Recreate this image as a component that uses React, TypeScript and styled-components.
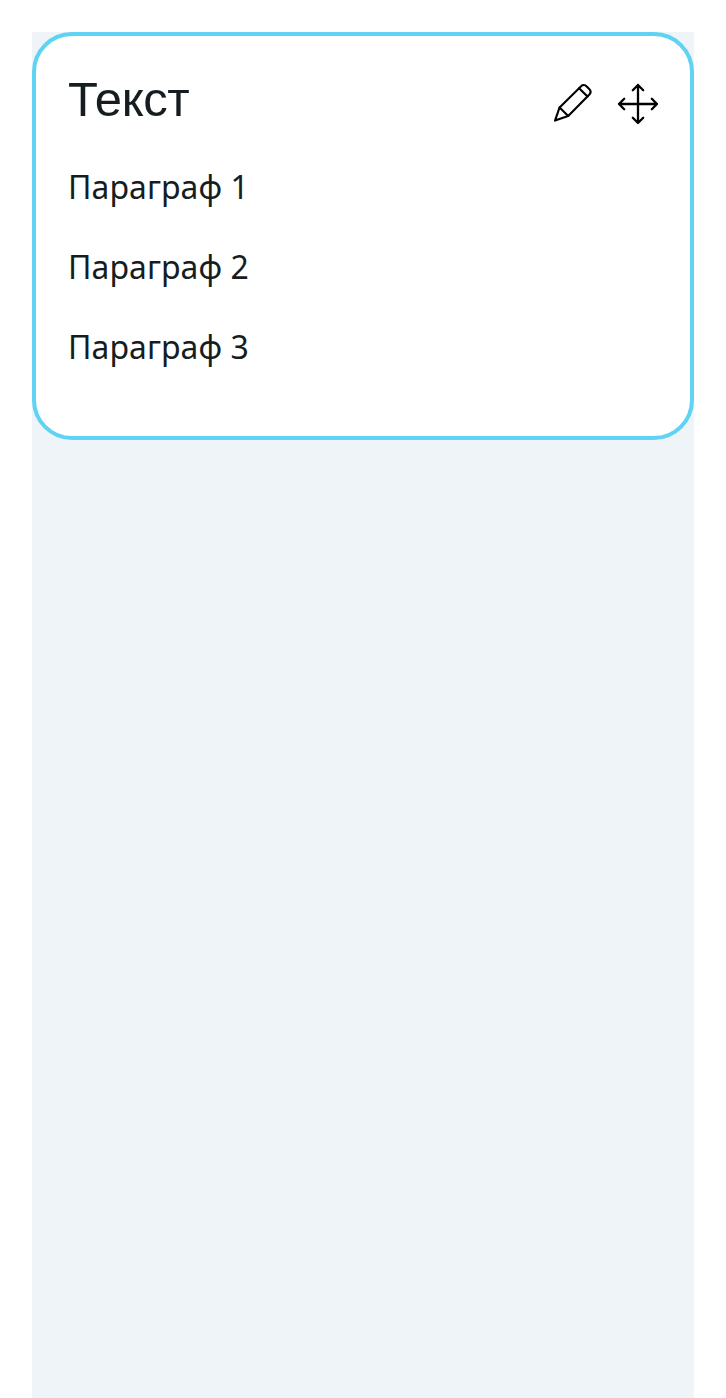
import React from "react";
import styled, { createGlobalStyle } from "styled-components";

const GlobalStyle = createGlobalStyle`
  *, *::before, *::after { box-sizing: border-box; }
  html, body { margin: 0; background: #fff; }
`;

const Page = styled.main`
  display: flex;
  height: 1398px;
  padding: 32px 32px 0;
  overflow: hidden;
  color: #161d20;
  font-family: "Noto Sans", sans-serif;
`;

const Canvas = styled.section`
  flex: 1;
  background: #eef4f7;
`;

const Card = styled.article`
  height: 408px;
  padding: 32px;
  border: 4px solid #5ed3f3;
  border-radius: 40px;
  background: #fff;
`;

const Header = styled.header`
  display: flex;
  align-items: flex-start;
  justify-content: space-between;
  height: 64px;
  margin-bottom: 31px;
`;

const Title = styled.h2`
  margin: 0;
  font: 400 49px/62px "Liberation Sans", sans-serif;
  letter-spacing: -0.4px;
`;

const Actions = styled.div`
  display: flex;
  gap: 24px;
  padding-top: 16px;
`;

const IconButton = styled.button`
  display: flex;
  width: 40px;
  height: 40px;
  padding: 0;
  border: 0;
  background: none;
  color: #000;
  cursor: pointer;
`;

const Icon = styled.svg`
  width: 40px;
  height: 40px;
  overflow: visible;
  fill: none;
  stroke: currentColor;
  stroke-linecap: round;
  stroke-linejoin: round;
`;

const Body = styled.div`
  display: flex;
  flex-direction: column;
  gap: 32px;
`;

const Paragraph = styled.p`
  margin: 0;
  font-size: 32px;
  line-height: 48px;
  letter-spacing: 0.1px;
`;

export default function App() {
  return (
    <>
      <GlobalStyle />
      <Page>
        <Canvas>
          <Card>
            <Header>
              <Title>Текст</Title>
              <Actions>
                <IconButton aria-label="Редактировать">
                  <Icon viewBox="0 0 40 40" strokeWidth="2.1">
                    <path d="M1 36.6 5.6 23.4 27.1 2.3C28.7.7 31.1.8 32.7 2.4L35.2 4.9C36.8 6.5 36.9 8.8 35.4 10.5L14.2 31.9 1 36.6Z" />
                    <path d="m5.6 23.4 8.6 8.5M25.1 4.3l8.4 8.3" />
                  </Icon>
                </IconButton>
                <IconButton aria-label="Переместить">
                  <Icon viewBox="0 0 40 40" strokeWidth="2.3">
                    <path d="M20 1v38M1 20h38M14.8 6.2 20 1l5.2 5.2M14.8 33.8 20 39l5.2-5.2M6.2 14.8 1 20l5.2 5.2M33.8 14.8 39 20l-5.2 5.2" />
                  </Icon>
                </IconButton>
              </Actions>
            </Header>
            <Body>
              <Paragraph>Параграф 1</Paragraph>
              <Paragraph>Параграф 2</Paragraph>
              <Paragraph>Параграф 3</Paragraph>
            </Body>
          </Card>
        </Canvas>
      </Page>
    </>
  );
}
